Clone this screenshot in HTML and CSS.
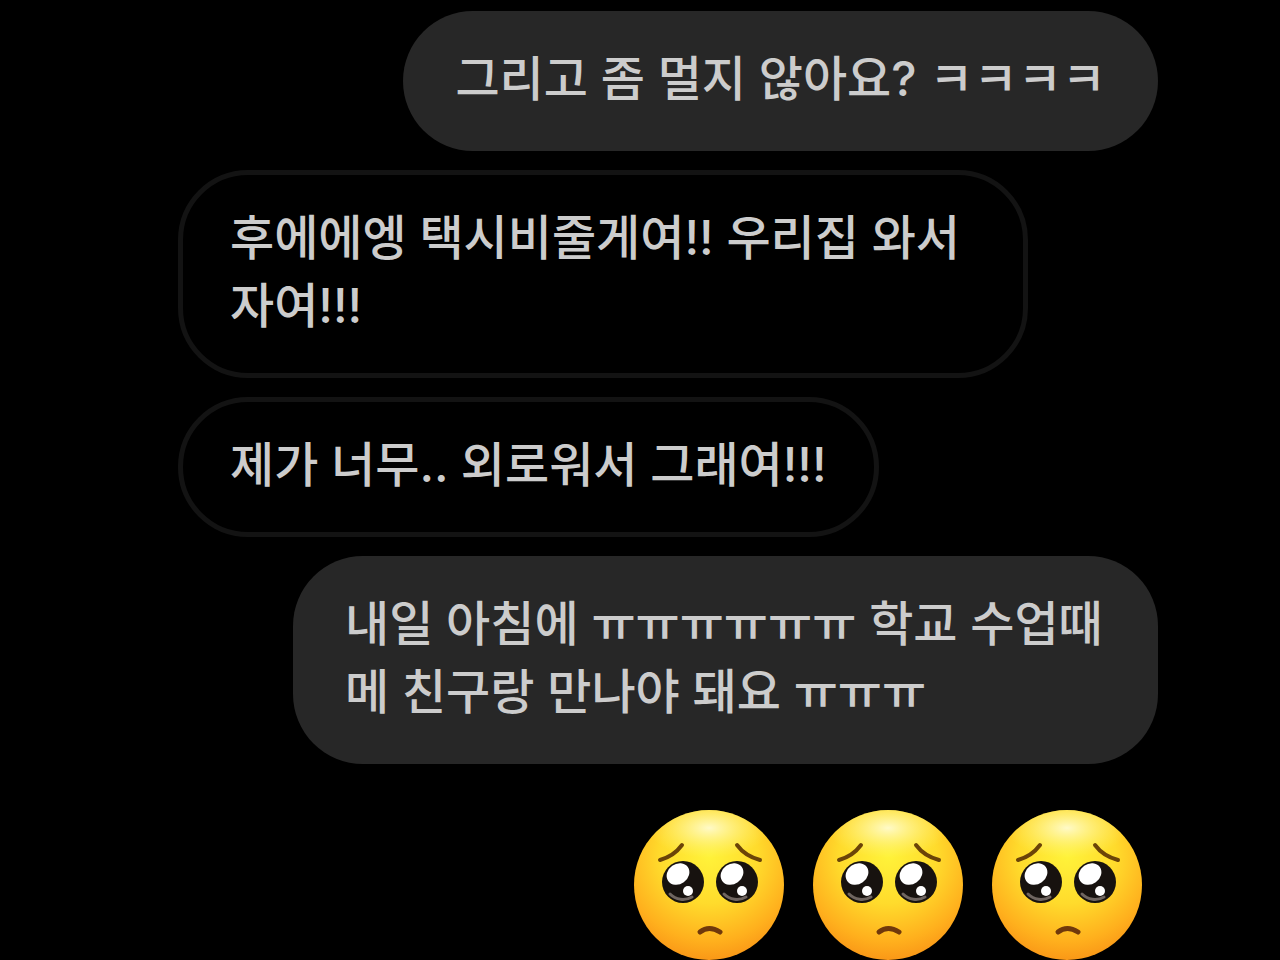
FILE: index.html
```html
<!DOCTYPE html>
<html lang="ko">
<head>
    <meta charset="UTF-8">
    <meta name="viewport" content="width=device-width, initial-scale=1.0">
    <title>채팅</title>
    <link rel="stylesheet" href="styles.css">
</head>
<body>
    <svg class="defs" width="0" height="0" aria-hidden="true">
        <defs>
            <radialGradient id="face" cx="50%" cy="30%" r="72%">
                <stop offset="0" stop-color="#fff33a"/>
                <stop offset="0.45" stop-color="#ffdb2c"/>
                <stop offset="0.8" stop-color="#ffb01d"/>
                <stop offset="1" stop-color="#f99416"/>
            </radialGradient>
            <radialGradient id="shine" cx="50%" cy="50%" r="50%">
                <stop offset="0" stop-color="#fffbd0" stop-opacity="0.95"/>
                <stop offset="1" stop-color="#fff27a" stop-opacity="0"/>
            </radialGradient>
            <clipPath id="round">
                <circle cx="75" cy="75" r="75"/>
            </clipPath>
            <symbol id="pleading" viewBox="0 0 150 150">
                <circle cx="75" cy="75" r="75" fill="url(#face)"/>
                <ellipse cx="75" cy="18" rx="60" ry="30" fill="url(#shine)" clip-path="url(#round)"/>
                <g fill="none" stroke="#6b4408" stroke-width="4" stroke-linecap="round">
                    <path d="M26 50Q40 46 48 35"/>
                    <path d="M103 35Q111 46 126 50"/>
                </g>
                <g fill="#17120f">
                    <circle cx="49" cy="72" r="21"/>
                    <circle cx="103" cy="72" r="21"/>
                </g>
                <g fill="none" stroke="#6f6560" stroke-width="3" stroke-linecap="round">
                    <path d="M36 84A18 18 0 0 0 58 87"/>
                    <path d="M90 84A18 18 0 0 0 112 87"/>
                </g>
                <g fill="#fff">
                    <ellipse cx="44" cy="64" rx="12" ry="10" transform="rotate(-35 44 64)"/>
                    <ellipse cx="98" cy="64" rx="12" ry="10" transform="rotate(-35 98 64)"/>
                    <circle cx="54" cy="81" r="5"/>
                    <circle cx="108" cy="81" r="5"/>
                </g>
                <path d="M66 122Q75 115 86 122" fill="none" stroke="#70380b" stroke-width="5" stroke-linecap="round"/>
            </symbol>
        </defs>
    </svg>

    <main class="chat">
        <div class="bubble sent">그리고 좀 멀지 않아요? ㅋㅋㅋㅋ</div>
        <div class="bubble received">후에에엥 택시비줄게여!! 우리집 와서 자여!!!</div>
        <div class="bubble received">제가 너무.. 외로워서 그래여!!!</div>
        <div class="bubble sent">내일 아침에 ㅠㅠㅠㅠㅠㅠ 학교 수업때메 친구랑 만나야 돼요 ㅠㅠㅠ</div>
        <div class="emojis" role="img" aria-label="🥺🥺🥺">
            <svg class="emoji"><use href="#pleading"/></svg>
            <svg class="emoji"><use href="#pleading"/></svg>
            <svg class="emoji"><use href="#pleading"/></svg>
        </div>
    </main>
</body>
</html>
```

FILE: styles.css
```css
* {
    box-sizing: border-box;
}

body {
    margin: 0;
    background: #000;
    color: #cccccc;
    font-family: Inter, "Noto Sans CJK KR", sans-serif;
    font-size: 48px;
    font-weight: 500;
    line-height: 68px;
}

.defs {
    display: block;
}

.chat {
    display: flex;
    flex-direction: column;
    gap: 19px;
    padding: 11px 122px 0 178px;
}

.bubble {
    padding: 34px 52px 38px;
    border-radius: 70px;
}

.sent {
    align-self: flex-end;
    max-width: 865px;
    background: #272727;
}

/* the border takes its share of the padding */
.received {
    align-self: flex-start;
    max-width: 850px;
    padding: 29px 47px 33px;
    border: 5px solid #131313;
}

.emojis {
    display: flex;
    align-self: flex-end;
    gap: 29px;
    margin-top: 27px;
    padding-right: 16px;
}

.emoji {
    display: block;
    width: 150px;
    height: 150px;
}
```
